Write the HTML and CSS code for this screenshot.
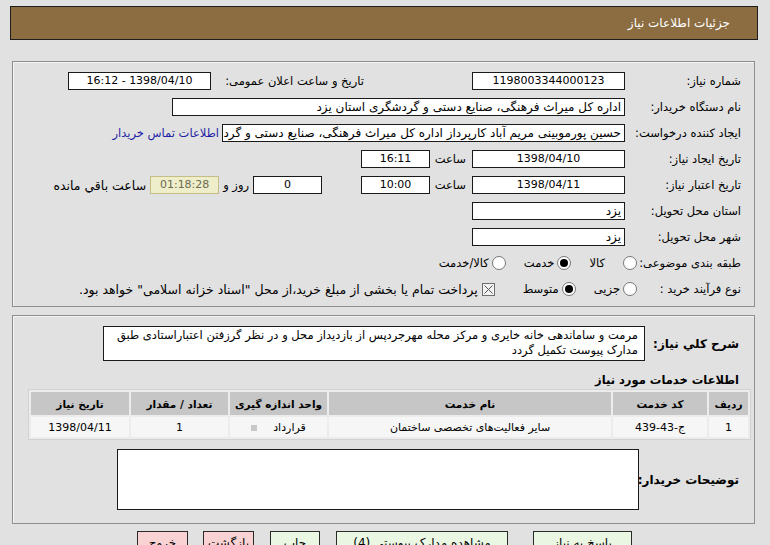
FILE: index.html
```html
<!DOCTYPE html>
<html lang="fa" dir="rtl">
<head>
<meta charset="utf-8">
<title>جزئیات اطلاعات نیاز</title>
<link rel="stylesheet" href="styles.css">
</head>
<body>
<div class="titlebar">جزئیات اطلاعات نیاز</div>

<div class="panel p1">
  <div class="row">
    <span class="lbl">شماره نیاز:</span>
    <span class="box w153 c">1198003344000123</span>
    <span class="lbl2 r1">تاریخ و ساعت اعلان عمومی:</span>
    <span class="box w143 c">1398/04/10 - 16:12</span>
  </div>
  <div class="row">
    <span class="lbl">نام دستگاه خریدار:</span>
    <span class="box w453 rt">اداره کل میراث فرهنگی، صنایع دستی و گردشگری استان یزد</span>
  </div>
  <div class="row">
    <span class="lbl">ایجاد کننده درخواست:</span>
    <span class="box w403 rt">حسین پورموبینی مریم آباد کارپرداز اداره کل میراث فرهنگی، صنایع دستی و گردشگری</span>
    <a class="link" href="#">اطلاعات تماس خریدار</a>
  </div>
  <div class="row">
    <span class="lbl">تاریخ ایجاد نیاز:</span>
    <span class="box w153 c">1398/04/10</span>
    <span class="word">ساعت</span>
    <span class="box w69 c">16:11</span>
  </div>
  <div class="row">
    <span class="lbl">تاریخ اعتبار نیاز:</span>
    <span class="box w153 c">1398/04/11</span>
    <span class="word">ساعت</span>
    <span class="box w69 c">10:00</span>
    <span class="box w69 c gap39">0</span>
    <span class="word2">روز و</span>
    <span class="box w69 c remain">01:18:28</span>
    <span class="word2 big">ساعت باقي مانده</span>
  </div>
  <div class="row">
    <span class="lbl">استان محل تحویل:</span>
    <span class="box w153 rt">یزد</span>
  </div>
  <div class="row">
    <span class="lbl">شهر محل تحویل:</span>
    <span class="box w153 rt">یزد</span>
  </div>
  <div class="row">
    <span class="lbl lblr">طبقه بندی موضوعی:</span>
    <span class="opt"><span class="radio"></span><span class="otext far">کالا</span></span>
    <span class="opt"><span class="radio on"></span><span class="otext">خدمت</span></span>
    <span class="opt"><span class="radio"></span><span class="otext">کالا/خدمت</span></span>
  </div>
  <div class="row">
    <span class="lbl lblr">نوع فرآیند خرید :</span>
    <span class="opt"><span class="radio"></span><span class="otext">جزیی</span></span>
    <span class="opt"><span class="radio on"></span><span class="otext">متوسط</span></span>
    <span class="opt chk"><svg class="cbox" width="13" height="13" viewBox="0 0 13 13"><rect x="0.5" y="0.5" width="12" height="12" fill="#f2f2f2" stroke="#6e6e6e"/><path d="M2.5 2.5 L10.5 10.5 M10.5 2.5 L2.5 10.5" stroke="#555" stroke-width="1"/></svg><span class="otext big">پرداخت تمام یا بخشی از مبلغ خرید،از محل "اسناد خزانه اسلامی" خواهد بود.</span></span>
  </div>
</div>

<div class="panel p2">
  <div class="desc">
    <span class="blbl dl">شرح کلي نیاز:</span>
    <div class="descbox">مرمت و ساماندهی خانه خایری و مرکز محله مهرجردپس از بازدیداز محل و در نظر گرزفتن اعتباراستادی طبق مدارک پیوست تکمیل گردد</div>
  </div>
  <div class="blbl sect">اطلاعات خدمات مورد نیاز</div>
  <table class="grid">
    <thead>
      <tr>
        <th class="c1">ردیف</th>
        <th class="c2">کد خدمت</th>
        <th class="c3">نام خدمت</th>
        <th class="c4">واحد اندازه گیری</th>
        <th class="c5">تعداد / مقدار</th>
        <th class="c6">تاریخ نیاز</th>
      </tr>
    </thead>
    <tbody>
      <tr>
        <td>1</td>
        <td>ج-43-439</td>
        <td>سایر فعالیت‌های تخصصی ساختمان</td>
        <td><span class="unit">قرارداد</span><span class="sq"></span></td>
        <td>1</td>
        <td>1398/04/11</td>
      </tr>
    </tbody>
  </table>
  <div class="notes">
    <span class="blbl nl">توضیحات خریدار:</span>
    <div class="notebox"></div>
  </div>
</div>

<div class="buttons">
  <span class="btn green b1">پاسخ به نیاز</span>
  <span class="btn green b2">مشاهده مدارک پیوستی (4)</span>
  <span class="btn green b3">چاپ</span>
  <span class="btn pink b4">بازگشت</span>
  <span class="btn pink b5">خروج</span>
</div>
</body>
</html>
```

FILE: styles.css
```css
* { box-sizing: border-box; }
html, body { margin: 0; padding: 0; }
body {
  background: #e1e1e1;
  font-family: Tahoma, "DejaVu Sans", sans-serif;
  font-size: 11.5px;
  color: #000;
  width: 770px;
  height: 545px;
  overflow: hidden;
}
.titlebar {
  margin: 6px 12px 0 10px;
  height: 34px;
  background: #8c6d42;
  border: 1px solid #1e1e1e;
  color: #fff;
  font-size: 12px;
  line-height: 32px;
  padding-right: 27px;
}
.panel {
  margin: 0 15px 0 12px;
  border: 1px solid #8e8e8e;
  box-shadow: inset 1px 1px 0 #f4f4f4;
}
.p1 {
  margin-top: 21px;
  padding: 6px 13px 4px 0;
}
.row {
  display: flex;
  align-items: center;
  height: 26px;
  white-space: nowrap;
}
.lbl { width: 116px; flex: none; }
.lblr { width: 104px; }
.box {
  flex: none;
  height: 18px;
  line-height: 16px;
  background: #fff;
  border: 1px solid #1a1a1a;
  padding: 0 4px;
  overflow: hidden;
  white-space: nowrap;
}
.c { text-align: center; font-size: 11px; }
.rt { text-align: right; font-size: 12px; padding: 0 3px; }
.w153 { width: 153px; }
.w143 { width: 143px; }
.w453 { width: 453px; }
.w403 { width: 403px; }
.w69 { width: 69px; }
.lbl2.r1 { margin-right: 108px; width: 153px; }
.link { color: #1f1fa6; text-decoration: none; margin-right: 3px; font-size: 11.5px; }
.word { margin: 0 6px 0 6px; width: 30px; flex: none; }
.gap39 { margin-right: 39px; }
.word2 { margin: 0 4px; }
.big { font-size: 12.5px; }
.remain {
  background: #efeecb;
  border-color: #c4bd86;
  color: #6b6b50;
}
.opt { display: flex; align-items: center; flex: none; }
.radio {
  width: 14px;
  height: 14px;
  border-radius: 50%;
  border: 1px solid #777;
  background: #fff;
  position: relative;
  flex: none;
}
.radio.on::after {
  content: "";
  position: absolute;
  left: 2px; top: 2px;
  width: 8px; height: 8px;
  border-radius: 50%;
  background: #000;
}
.otext { margin: 0 3px 0 18px; }
.otext.far { margin-right: 18px; }
.chk { margin-right: 10px; }
.chk .otext { margin-right: 4px; }
.cbox { flex: none; }

.p2 {
  margin-top: 8px;
  padding: 10px 3px 12px 16px;
  height: 209px;
}
.blbl { font-weight: bold; font-size: 12px; white-space: nowrap; }
.desc { display: flex; align-items: center; }
.dl { width: 106px; padding-right: 12px; flex: none; }
.descbox {
  width: 542px;
  height: 35px;
  background: #fff;
  border: 1px solid #1a1a1a;
  padding: 1px 6px 0 6px;
  line-height: 15px;
  font-size: 11.5px;
  text-align: right;
  overflow: hidden;
}
.sect { padding-right: 12px; height: 18px; line-height: 18px; margin-top: 10px; font-size: 11.5px; }
.grid {
  width: 723px;
  border-collapse: separate;
  border-spacing: 2px;
  background: #ececec;
  border: 1px solid #d2d2d2;
  margin-top: 0;
}
.grid th {
  background: #c6c6c6;
  height: 23px;
  font-weight: bold;
  font-size: 10.5px;
  padding: 0;
}
.grid td {
  background: #f6f6f6;
  height: 20px;
  text-align: center;
  padding: 0;
  font-size: 11px;
}
.c1 { width: 39px; }
.c2 { width: 94px; }
.c3 { width: 282px; }
.c4 { width: 97px; }
.c5 { width: 97px; }
.c6 { width: 98px; }
.unit { display: inline-block; }
.sq {
  display: inline-block;
  width: 6px; height: 6px;
  background: #c8c8c8;
  margin-right: 16px;
  vertical-align: middle;
}
.notes { display: flex; align-items: center; margin-top: 9px; }
.nl { width: 112px; padding-right: 12px; flex: none; }
.notebox {
  width: 522px;
  height: 61px;
  background: #fff;
  border: 1px solid #1a1a1a;
}
.buttons {
  display: flex;
  margin-top: 7px;
  padding-right: 138px;
}
.btn {
  flex: none;
  height: 24px;
  border: 1px solid #2a2a2a;
  text-align: center;
  line-height: 22px;
  font-size: 12px;
}
.green { background: #e9f7e3; }
.pink { background: #f9d3d3; }
.b1 { width: 99px; }
.b2 { width: 172px; margin-right: 25px; }
.b3 { width: 50px; margin-right: 16px; }
.b4 { width: 51px; margin-right: 16px; }
.b5 { width: 51px; margin-right: 15px; }
```
